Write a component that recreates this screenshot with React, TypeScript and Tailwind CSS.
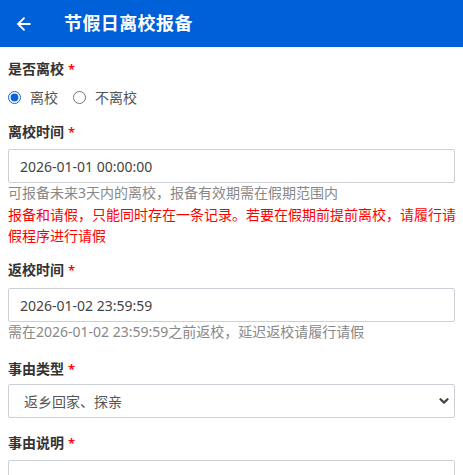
import { ArrowLeft } from 'lucide-react';

const font = { fontFamily: '"Noto Sans", "Noto Sans CJK SC", sans-serif' };

function Label({ text, className = '' }: { text: string; className?: string }) {
  return (
    <div className={`text-[14px] leading-[22px] font-semibold text-[#333] ${className}`}>
      {text}
      <span className="text-[#f00] ml-[4px] text-[13px]">*</span>
    </div>
  );
}

export default function App() {
  return (
    <div className="w-[463px] h-[475px] overflow-hidden bg-white" style={font}>
      {/* Header */}
      <div className="h-[47px] bg-[#0060d8] flex items-center text-white">
        <div className="w-[64px] pl-[14px] flex items-center">
          <ArrowLeft size={20} strokeWidth={2.2} />
        </div>
        <h1 className="text-[18px] font-bold tracking-[0.4px]">节假日离校报备</h1>
      </div>

      <div className="px-2">
        {/* 是否离校 */}
        <Label text="是否离校" className="mt-[11px]" />
        <div className="mt-[6px] flex items-center h-[22px] text-[14px] text-[#555]">
          <label className="flex items-center">
            <input type="radio" name="leave" defaultChecked className="m-0 w-[13px] h-[13px] accent-[#0b63d6]" />
            <span className="ml-[9px]">离校</span>
          </label>
          <label className="flex items-center ml-[15px]">
            <input type="radio" name="leave" className="m-0 w-[13px] h-[13px]" />
            <span className="ml-[9px]">不离校</span>
          </label>
        </div>

        {/* 离校时间 */}
        <Label text="离校时间" className="mt-[13px]" />
        <div className="mt-[6px] h-[34px] border border-[#ccd0d6] rounded-[2px] flex items-center px-[11px] text-[14px] text-[#444]">
          2026-01-01 00:00:00
        </div>
        <p className="text-[14px] leading-[20px] text-[#888]">可报备未来3天内的离校，报备有效期需在假期范围内</p>
        <p className="mt-[1px] mr-[-3px] text-[14px] leading-[21px] text-[#f00]">
          报备和请假，只能同时存在一条记录。若要在假期前提前离校，请履行请假程序进行请假
        </p>

        {/* 返校时间 */}
        <Label text="返校时间" className="mt-[13px]" />
        <div className="mt-[7px] h-[34px] border border-[#ccd0d6] rounded-[2px] flex items-center px-[11px] text-[14px] text-[#444]">
          2026-01-02 23:59:59
        </div>
        <p className="text-[14px] leading-[20px] text-[#888]">需在2026-01-02 23:59:59之前返校，延迟返校请履行请假</p>

        {/* 事由类型 */}
        <Label text="事由类型" className="mt-[16px]" />
        <div className="relative mt-[4px]">
          <select className="w-full h-[34px] appearance-none border border-[#ccd0d6] rounded-[2px] bg-white pl-[15px] pr-8 text-[14px] text-[#555] outline-none">
            <option>返乡回家、探亲</option>
          </select>
          <svg
            className="absolute right-[6px] top-[13px] pointer-events-none"
            width="10"
            height="8"
            viewBox="0 0 10 8"
            fill="none"
            stroke="#444"
            strokeWidth="2.2"
            strokeLinecap="round"
            strokeLinejoin="round"
          >
            <path d="M1.5 2.2 5 5.6 8.5 2.2" />
          </svg>
        </div>

        {/* 事由说明 */}
        <Label text="事由说明" className="mt-[14px]" />
        <div className="mt-[6px] h-[60px] border border-[#ccd0d6] rounded-[2px]" />
      </div>
    </div>
  );
}
